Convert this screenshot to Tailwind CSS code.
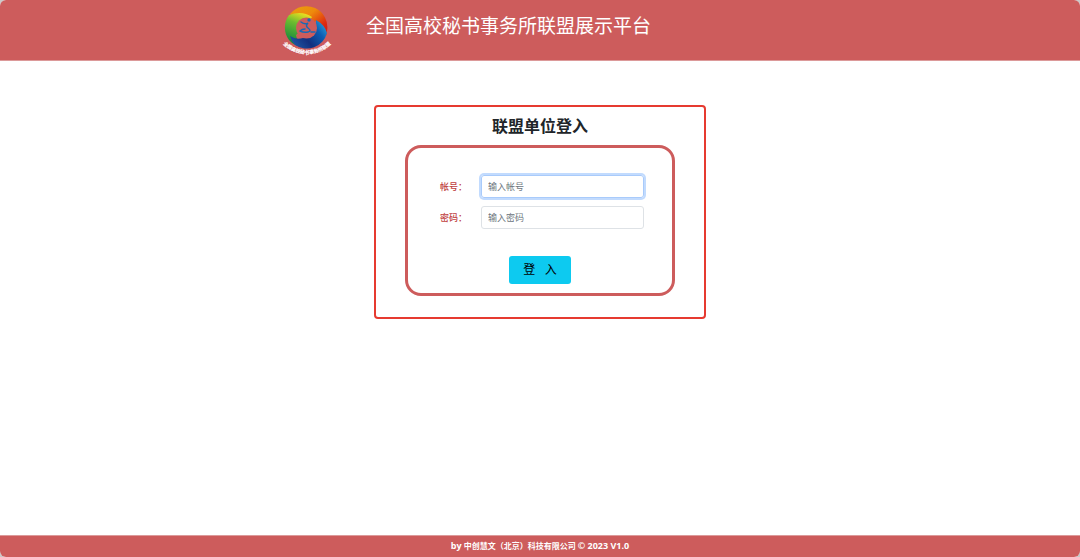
<!DOCTYPE html>
<html lang="zh-CN">
<head>
  <meta charset="UTF-8">
  <meta name="viewport" content="width=device-width, initial-scale=1.0">
  <title>全国高校秘书事务所联盟展示平台</title>
  <script src="https://cdn.jsdelivr.net/npm/@tailwindcss/browser@4"></script>
</head>
<body class="bg-[#cacaca] font-['Open_Sans','Noto_Sans_CJK_SC',sans-serif] text-[#212529]">

  <!-- Page -->
  <div class="min-h-screen flex flex-col bg-white rounded-md overflow-hidden">

    <!-- Header -->
    <header class="bg-[#cd5c5c] border-b border-[#dc9a9a]">
      <div class="w-1/2 mx-auto h-15 flex items-start gap-8 pl-2 pt-1">
        <svg class="w-14 h-14 shrink-0" viewBox="0 0 56 56" role="img" aria-label="联盟标志">
          <defs>
            <linearGradient id="warm" x1="0" y1="0" x2="1" y2="1">
              <stop offset="0" stop-color="#e8a010"/>
              <stop offset="0.4" stop-color="#ee8a0c"/>
              <stop offset="0.75" stop-color="#de2a10"/>
              <stop offset="1" stop-color="#c81818"/>
            </linearGradient>
            <linearGradient id="green" x1="0.7" y1="0" x2="0.4" y2="1">
              <stop offset="0" stop-color="#f0e020"/>
              <stop offset="0.35" stop-color="#6cbc30"/>
              <stop offset="1" stop-color="#07803f"/>
            </linearGradient>
            <linearGradient id="blue" x1="1" y1="0" x2="0" y2="0.6">
              <stop offset="0" stop-color="#35b3e6"/>
              <stop offset="0.35" stop-color="#0c5db2"/>
              <stop offset="0.7" stop-color="#12307f"/>
              <stop offset="1" stop-color="#1c4f9c"/>
            </linearGradient>
            <mask id="hole">
              <rect width="56" height="56" fill="#fff"/>
              <circle cx="28.500" cy="24" r="10.500" fill="#000"/>
            </mask>
            <path id="arc" d="M4 39 A34 34 0 0 0 54 39"/>
          </defs>
          <!-- Ring of three blades -->
          <g mask="url(#hole)">
            <path fill="url(#warm)" d="M12 10 A21 21 0 0 1 49 27 L48 32 Q46 24 38 17 L28 22 L12 10Z"/>
            <path fill="url(#green)" d="M11 11 Q24 6 34 13 L28 22 L18 31 Q19 38 25 43 Q16 42 11 36 A21 21 0 0 1 11 11Z"/>
            <path fill="url(#blue)" d="M38 16 Q47 21 49 29 A21 21 0 0 1 17 41 Q13 37 12 32 Q18 36 25 34 L32 27 L38 24Z"/>
          </g>
          <!-- Figure -->
          <circle cx="31" cy="16" r="1.700" fill="#1769b5"/>
          <path fill="none" stroke="#1769b5" stroke-width="1.500" stroke-linecap="round" d="M23 18 Q27 21 30 19 Q27 22 30 24 Q34 27 30 28 Q26 29 22 27 M27 25 Q24 25 22 27 M33 28 L37 28"/>
          <text class="font-bold" font-size="4.800" fill="#fff" stroke="#fff" stroke-width="0.200"><textPath href="#arc" startOffset="50%" text-anchor="middle">全国高校秘书事务所联盟</textPath></text>
        </svg>
        <h1 class="pt-2 text-[19px] leading-7 text-white whitespace-nowrap">全国高校秘书事务所联盟展示平台</h1>
      </div>
    </header>

    <!-- Login -->
    <main class="grow pt-11">
      <section class="w-[332px] mx-auto border-2 border-[#e63a30] rounded-sm px-[29px] pt-[7px] pb-[21px]">
        <h2 class="text-center text-base leading-6 font-bold">联盟单位登入</h2>
        <form class="mt-[7px] border-3 border-[#cd5c5c] rounded-2xl px-7 pt-[27px] pb-[9px]">
          <div class="flex items-center pl-1">
            <label for="account" class="w-[41px] text-[9px] text-[#c04040] font-medium">帐号：</label>
            <input id="account" type="text" placeholder="输入帐号" class="grow min-w-0 h-[23px] px-1.5 text-[9px] border border-[#a9cbfb] rounded-[3px] ring-2 ring-[#c2dbfe] outline-none placeholder:text-[#6c757d]">
          </div>
          <div class="flex items-center pl-1 mt-2">
            <label for="password" class="w-[41px] text-[9px] text-[#c04040] font-medium">密码：</label>
            <input id="password" type="password" placeholder="输入密码" class="grow min-w-0 h-[23px] px-1.5 text-[9px] border border-[#dee2e6] rounded-[3px] outline-none placeholder:text-[#6c757d]">
          </div>
          <button type="submit" class="block mx-auto mt-[27px] w-[62px] h-7 rounded-[3px] bg-[#0dcaf0] text-xs text-black">登&nbsp;&nbsp;&nbsp;入</button>
        </form>
      </section>
    </main>

    <!-- Footer -->
    <footer class="bg-[#cd5c5c] border-t border-[#dc9a9a] h-[22px] pb-px flex items-center justify-center gap-0.5 text-[8px] leading-4 font-bold text-white">
      <span class="text-[9px]">by</span>
      <span>中创慧文（北京）科技有限公司</span>
      <span class="text-[9px]">© 2023 V1.0</span>
    </footer>
  </div>
</body>
</html>
